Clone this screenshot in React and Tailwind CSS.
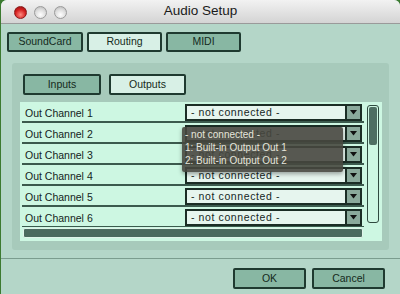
import React from 'react';

const rows = [1, 2, 3, 4, 5, 6];

const Light = ({ red }) => (
  <div
    className={
      red
        ? 'w-[13px] h-[13px] rounded-full border border-[#8a1a1a] bg-[radial-gradient(circle_at_50%_70%,#ff8a80,#d42020_55%,#8c1010)]'
        : 'w-[13px] h-[13px] rounded-full border border-[#9a9a9a] bg-[radial-gradient(circle_at_50%_70%,#ffffff,#dcdcdc_55%,#b4b4b4)]'
    }
  />
);

const Btn = ({ label, active, className = '' }) => (
  <div
    className={`flex items-center justify-center border-2 border-[#1f3a30] rounded-[2px] text-[10.5px] text-[#142a20] ${
      active ? 'bg-[#d8f0e6]' : 'bg-[#88b7a3]'
    } ${className}`}
  >
    {label}
  </div>
);

const Dropdown = () => (
  <div className="flex h-[17px] mt-[2px]">
    <div className="w-[162px] border-2 border-[#1b2d25] bg-[#e6f5ee] text-[10.5px] tracking-[0.6px] leading-[13px] pl-[4px] text-[#15261e]">
      - not connected -
    </div>
    <div className="w-[15px] border-2 border-l-0 border-[#1b2d25] bg-[#8aa99b] flex items-center justify-center">
      <svg width="7" height="5" viewBox="0 0 7 5">
        <path d="M0 0h7L3.5 4.5z" fill="#111" />
      </svg>
    </div>
  </div>
);

export default function App() {
  return (
    <div
      className="w-[400px] h-[294px] bg-[#3c7a30] pl-px overflow-hidden"
      style={{ fontFamily: '"Liberation Sans", Arial, sans-serif' }}
    >
      <div className="h-full rounded-t-[6px] bg-[#b4d6c8] flex flex-col overflow-hidden">
        {/* title bar */}
        <div className="relative h-[24px] flex items-center justify-center bg-gradient-to-b from-[#f2f2f2] to-[#d4d4d4] border-b border-[#9a9a9a]">
          <div className="absolute left-[13px] top-[6px] flex gap-[7px]">
            <Light red />
            <Light />
            <Light />
          </div>
          <span className="text-[13.5px] text-[#1a1a1a]">Audio Setup</span>
        </div>

        {/* tabs */}
        <div className="flex gap-[4px] pl-[6px] pt-[8px]">
          <Btn label="SoundCard" className="w-[76px] h-[20px]" />
          <Btn label="Routing" active className="w-[75px] h-[20px]" />
          <Btn label="MIDI" className="w-[75px] h-[20px]" />
        </div>

        {/* routing panel */}
        <div className="mx-[11px] mt-[11px] h-[187px] rounded-[3px] bg-[#a7cabb] pl-[8px] pr-[7px] pt-[11px]">
          <div className="flex gap-[8px] pl-[3px]">
            <Btn label="Inputs" className="w-[78px] h-[21px]" />
            <Btn label="Outputs" active className="w-[77px] h-[21px]" />
          </div>

          <div className="relative mt-[7px] h-[139px] bg-[#cdf7e2] flex">
            <div className="w-[344px] flex flex-col">
              <div className="h-[125px] overflow-hidden">
                {rows.map((n) => (
                  <div key={n} className="h-[21px] flex border-b-2 border-[#3b5a4d] ml-[2px]">
                    <div className="w-[163px] pl-[3px] pt-[4px] text-[10.5px] text-[#13241c]">
                      Out Channel {n}
                    </div>
                    <Dropdown />
                  </div>
                ))}
              </div>
              <div className="ml-[3px] mr-[1px] mt-[1px] h-[10px] rounded-[2px] border border-[#e0f5ea] bg-[#4b6b5f]" />
            </div>
            <div className="ml-[3px] mt-[3px] w-[12px] h-[118px] rounded-[3px] border border-[#2f4a3f] p-[1px]">
              <div className="h-[38px] rounded-[2px] bg-[#4e6e62]" />
            </div>

            {/* open popup */}
            <div className="absolute left-[162px] top-[25px] w-[161px] h-[45px] rounded-[2px] bg-[#47473f]/90 shadow-[0_2px_4px_rgba(0,0,0,0.35)] pl-[3px] pt-[1px] text-[10px] leading-[13px] text-[#e6e6dc]">
              <div>- not connected -</div>
              <div>1: Built-in Output Out 1</div>
              <div>2: Built-in Output Out 2</div>
            </div>
          </div>
        </div>

        <div className="mt-[8px] h-px bg-[#7b9c8e]" />

        <div className="flex justify-end gap-[6px] pr-[15px] pt-[9px]">
          <Btn label="OK" className="w-[73px] h-[21px]" />
          <Btn label="Cancel" className="w-[73px] h-[21px]" />
        </div>
      </div>
    </div>
  );
}
